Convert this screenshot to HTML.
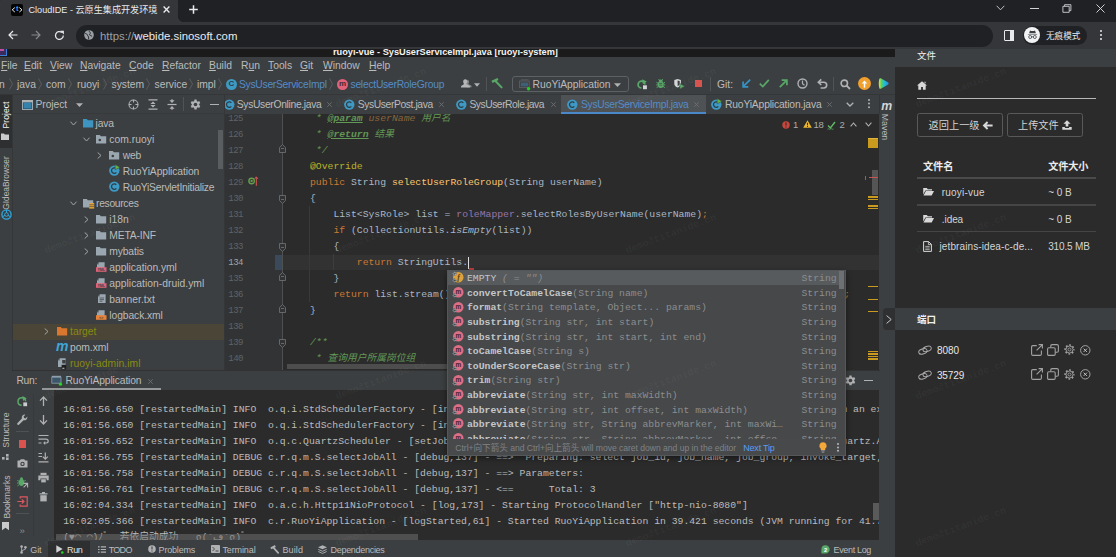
<!DOCTYPE html>
<html><head><meta charset="utf-8"><title>CloudIDE</title>
<style>
*{box-sizing:border-box;margin:0;padding:0}
html,body{width:1116px;height:557px;overflow:hidden;background:#2b2b2b}
body{position:relative;font-family:"Liberation Sans","Noto Sans CJK SC",sans-serif;font-size:12px;color:#bbbbbb}
.a{position:absolute}
.t{position:absolute;white-space:nowrap;line-height:16px;height:16px}
.mono{font-family:"Liberation Mono","Noto Sans CJK SC",monospace;font-size:10px}
.code{font-family:"Liberation Mono","Noto Sans CJK SC",monospace;font-size:9.75px;white-space:pre}
svg{position:absolute;overflow:visible}
/* chrome */
#tabstrip{left:0;top:0;width:1116px;height:22.2px;background:#202124}
#tab{left:0;top:-4px;width:177.8px;height:26.2px;background:#35363a;border-radius:6px 6px 0 0}
#toolbar{left:0;top:22.2px;width:1116px;height:26.6px;background:#35363a}
#omni{left:76px;top:25.2px;width:917px;height:21.6px;background:#202124;border-radius:11px}
/* ide */
#title{left:0;top:48.8px;width:895px;height:8.3px;background:#1b1b1b;overflow:hidden}
#menu{left:0;top:56.8px;width:895px;height:17.2px;background:#3c3f41}
#nav{left:0;top:74px;width:895px;height:20px;background:#3c3f41}
#lstrip{left:0;top:94px;width:12px;height:446px;background:#3c3f41}
#proj{left:12px;top:94px;width:212px;height:276px;background:#3c3f41;overflow:hidden}
#etabs{left:224px;top:94px;width:655.2px;height:20px;background:#3c3f41}
#rstrip{left:879.2px;top:94px;width:15.8px;height:446px;background:#3c3f41}
#gutter{left:224px;top:114px;width:59px;height:256.4px;background:#313335}
#editor{left:283px;top:114px;width:596.2px;height:256.4px;background:#2b2b2b;overflow:hidden}
#runhdr{left:12px;top:370px;width:867.2px;height:20.3px;background:#3c3f41}
#runtb{left:12px;top:390.3px;width:42px;height:149.7px;background:#3c3f41}
#console{left:54px;top:390.3px;width:825.2px;height:149.7px;background:#2b2b2b;overflow:hidden}
#status{left:0;top:540px;width:895px;height:17px;background:#3c3f41}
#rp{left:895px;top:49px;width:221px;height:508px;background:#2b2b2b}
</style></head><body>
<!-- CHROME -->
<div class="a" id="tabstrip"></div>
<div class="a" id="tab"></div>
<div class="a" style="left:177.8px;top:17.2px;width:5px;height:5px;background:radial-gradient(circle at 100% 0,rgba(53,54,58,0) 4.6px,#35363a 5.1px)"></div>
<div class="a" style="left:11px;top:4px;width:12px;height:11.5px;background:#050505;border-radius:2px"></div>
<svg style="left:11px;top:4px" width="12" height="12" viewBox="0 0 12 12"><path d="M3.8 3.6L1.2 5.8L3.8 8M8.4 3.6L11 5.8L8.4 8" stroke="#ffffff" stroke-width="0.9" fill="none"/></svg><div class="t" style="left:15.9px;top:1.4px;font-size:7.5px;color:#3d9be0;font-weight:bold">t</div>
<div class="t" style="left:28.5px;top:2.2px;font-size:9.1px;color:#e8eaed">CloudIDE - 云原生集成开发环境</div>
<svg style="left:162.6px;top:6.2px" width="7" height="7" viewBox="0 0 7 7"><path d="M0.6 0.6L6.4 6.4M6.4 0.6L0.6 6.4" stroke="#e8eaed" stroke-width="1.35" fill="none"/></svg>
<svg style="left:189px;top:5px" width="9" height="9" viewBox="0 0 9 9"><path d="M4.5 0.2V8.8M0.2 4.5H8.8" stroke="#e8eaed" stroke-width="1.5" fill="none"/></svg>
<svg style="left:996px;top:5px" width="9" height="6" viewBox="0 0 9 6"><path d="M0.7 0.8L4.5 4.8L8.3 0.8" stroke="#d0d2d5" stroke-width="0.9" fill="none"/></svg>
<div class="a" style="left:1030px;top:7.6px;width:8.5px;height:1px;background:#d0d2d5"></div>
<svg style="left:1062px;top:3.5px" width="10" height="9" viewBox="0 0 10 9"><path d="M0.9 2.3H7.2V8.3H0.9ZM2.6 2.2V0.7H8.9V6.6H7.3" stroke="#d0d2d5" stroke-width="0.9" fill="none"/></svg>
<svg style="left:1096px;top:3.8px" width="9" height="9" viewBox="0 0 9 9"><path d="M0.5 0.5L8.5 8.5M8.5 0.5L0.5 8.5" stroke="#e0e2e5" stroke-width="0.9" fill="none"/></svg>
<div class="a" id="toolbar"></div>
<div class="a" id="omni"></div>
<svg style="left:8px;top:30px" width="10" height="10" viewBox="0 0 10 10"><path d="M9.5 5H1.2M5 1L1 5L5 9" stroke="#e8eaed" stroke-width="1.2" fill="none"/></svg>
<svg style="left:31px;top:30px" width="10" height="10" viewBox="0 0 10 10"><path d="M0.5 5H8.8M5 1L9 5L5 9" stroke="#85888c" stroke-width="1.2" fill="none"/></svg>
<svg style="left:54px;top:29.5px" width="11" height="11" viewBox="0 0 11 11"><path d="M9.3 5.5A3.9 3.9 0 1 1 7.9 2.5" stroke="#e8eaed" stroke-width="1.25" fill="none"/><path d="M6.2 0.8H9.9V4.5Z" fill="#e8eaed"/></svg>
<svg style="left:83.5px;top:30px" width="10" height="10" viewBox="0 0 10 10"><circle cx="5" cy="5" r="4.8" fill="#9aa0a6"/><path d="M1.2 3.4C2.5 3.6 3.3 4.2 3.4 5.2C3.5 6 4.6 6 4.6 7V9.3M5.2 0.6C5 1.8 6.2 2 6.3 3C6.4 4 5.3 4.2 5.6 5C6 5.8 7.5 5.4 8 6.3" stroke="#202124" stroke-width="0.9" fill="none"/></svg>
<div class="t" style="left:100px;top:27.6px;font-size:11.4px;color:#e8eaed"><span style="color:#9aa0a6">https://</span>webide.sinosoft.com</div>
<div class="a" style="left:1004px;top:30px;width:10px;height:10.5px;border:1.4px solid #e8eaed;border-radius:1px"></div>
<div class="a" style="left:1009.5px;top:30px;width:4.5px;height:10.5px;background:#e8eaed"></div>
<div class="a" style="left:1023px;top:25.5px;width:64px;height:19px;background:#202124;border-radius:9.5px"></div>
<div class="a" style="left:1024px;top:27px;width:16px;height:16px;background:#f1f3f4;border-radius:8px"></div>
<svg style="left:1026.5px;top:30px" width="11" height="10" viewBox="0 0 11 10"><path d="M3 0.6L4.2 1H6.8L8 0.6L8.9 3.3H2.1ZM0.8 3.9H10.2V4.6H0.8Z" fill="#3c4043"/><circle cx="3.2" cy="7" r="1.5" fill="none" stroke="#3c4043" stroke-width="0.8"/><circle cx="7.8" cy="7" r="1.5" fill="none" stroke="#3c4043" stroke-width="0.8"/><path d="M4.7 6.8H6.3" stroke="#3c4043" stroke-width="0.7"/></svg>
<div class="t" style="left:1046px;top:28px;font-size:8.6px;color:#e8eaed">无痕模式</div>
<div class="a" style="left:1100.3px;top:30px;width:1.9px;height:1.9px;background:#e8eaed;border-radius:1px;box-shadow:0 4px 0 #e8eaed,0 8px 0 #e8eaed"></div>
<!-- IDE -->
<!-- sec_top -->
<div class="a" id="title"><div class="t" style="left:333px;top:-4.7px;font-size:9.22px;color:#f4f4f4;font-weight:bold;">ruoyi-vue - SysUserServiceImpl.java [ruoyi-system]</div><div class="a" style="left:0px;top:0.0px;width:7px;height:7px;background:#3b2a5e;border-right:1px solid #3a7fd5;border-bottom:1px solid #3a7fd5"></div><div class="a" style="left:0px;top:0.7px;width:4px;height:2px;background:#c14fa0;"></div></div><div class="a" id="menu"><div class="t" style="left:1px;top:1.0px;font-size:10.3px;"><u>F</u>ile</div><div class="t" style="left:24px;top:1.0px;font-size:10.3px;"><u>E</u>dit</div><div class="t" style="left:50px;top:1.0px;font-size:10.3px;"><u>V</u>iew</div><div class="t" style="left:80px;top:1.0px;font-size:10.3px;"><u>N</u>avigate</div><div class="t" style="left:129px;top:1.0px;font-size:10.3px;"><u>C</u>ode</div><div class="t" style="left:162px;top:1.0px;font-size:10.3px;"><u>R</u>efactor</div><div class="t" style="left:209px;top:1.0px;font-size:10.3px;"><u>B</u>uild</div><div class="t" style="left:241px;top:1.0px;font-size:10.3px;">R<u>u</u>n</div><div class="t" style="left:268px;top:1.0px;font-size:10.3px;"><u>T</u>ools</div><div class="t" style="left:300px;top:1.0px;font-size:10.3px;"><u>G</u>it</div><div class="t" style="left:323px;top:1.0px;font-size:10.3px;"><u>W</u>indow</div><div class="t" style="left:369px;top:1.0px;font-size:10.3px;"><u>H</u>elp</div></div><div class="a" id="nav"><div class="t" style="left:-1px;top:2.7px;font-size:10.3px">n</div><div class="t" style="left:17px;top:2.7px;font-size:10.3px">java</div><div class="t" style="left:46px;top:2.7px;font-size:10.3px">com</div><div class="t" style="left:77px;top:2.7px;font-size:10.3px">ruoyi</div><div class="t" style="left:111.5px;top:2.7px;font-size:10.3px">system</div><div class="t" style="left:154.5px;top:2.7px;font-size:10.3px">service</div><div class="t" style="left:197px;top:2.7px;font-size:10.3px">impl</div><svg style="left:9px;top:4px" width="4" height="12" viewBox="0 0 4 12"><path d="M0.5 0.5L3.5 6L0.5 11.5" stroke="#606366" stroke-width="0.8" fill="none"/></svg><svg style="left:37.5px;top:4px" width="4" height="12" viewBox="0 0 4 12"><path d="M0.5 0.5L3.5 6L0.5 11.5" stroke="#606366" stroke-width="0.8" fill="none"/></svg><svg style="left:68px;top:4px" width="4" height="12" viewBox="0 0 4 12"><path d="M0.5 0.5L3.5 6L0.5 11.5" stroke="#606366" stroke-width="0.8" fill="none"/></svg><svg style="left:102.5px;top:4px" width="4" height="12" viewBox="0 0 4 12"><path d="M0.5 0.5L3.5 6L0.5 11.5" stroke="#606366" stroke-width="0.8" fill="none"/></svg><svg style="left:145.5px;top:4px" width="4" height="12" viewBox="0 0 4 12"><path d="M0.5 0.5L3.5 6L0.5 11.5" stroke="#606366" stroke-width="0.8" fill="none"/></svg><svg style="left:188.5px;top:4px" width="4" height="12" viewBox="0 0 4 12"><path d="M0.5 0.5L3.5 6L0.5 11.5" stroke="#606366" stroke-width="0.8" fill="none"/></svg><svg style="left:217.5px;top:4px" width="4" height="12" viewBox="0 0 4 12"><path d="M0.5 0.5L3.5 6L0.5 11.5" stroke="#606366" stroke-width="0.8" fill="none"/></svg><svg style="left:329px;top:4px" width="4" height="12" viewBox="0 0 4 12"><path d="M0.5 0.5L3.5 6L0.5 11.5" stroke="#606366" stroke-width="0.8" fill="none"/></svg><div class="a" style="left:226px;top:5px;width:10.5px;height:10.5px;border-radius:6px;background:#3e9ac4"></div><div class="t" style="left:228.4px;top:2.2px;font-size:8px;font-weight:bold;color:#2b3e4a">C</div><div class="t" style="left:239px;top:2.7px;font-size:10.3px;letter-spacing:-0.274px;color:#548cc8">SysUserServiceImpl</div><div class="a" style="left:337px;top:5px;width:10.5px;height:10.5px;border-radius:6px;background:#e0637a"></div><div class="t" style="left:339px;top:1.6px;font-size:8px;font-weight:bold;color:#4a2a30">m</div><div class="t" style="left:350.5px;top:2.7px;font-size:10.3px;letter-spacing:-0.251px;color:#548cc8">selectUserRoleGroup</div><svg style="left:460.5px;top:5px" width="11" height="9" viewBox="0 0 11 9"><path d="M6.3 0.8C7.6 0.8 8 1.8 8 2.8C8 3.8 7.6 4.6 7.3 4.9C7.8 5.6 10.6 6 10.6 7.4V8.3H5Z" fill="#85888a"/><path d="M4.2 0.2C5.8 0.2 6.3 1.3 6.3 2.5C6.3 3.6 5.8 4.5 5.4 4.9C6 5.8 9 6.2 9 7.6V8.6H0V7.6C0 6.2 2.6 5.8 3.1 4.9C2.6 4.5 2.2 3.6 2.2 2.5C2.2 1.3 2.7 0.2 4.2 0.2Z" fill="#b4b6b8"/></svg><svg style="left:474px;top:9px" width="6" height="4" viewBox="0 0 6 4"><path d="M0 0.3H6L3 3.7Z" fill="#afb1b3"/></svg><div class="a" style="left:485.5px;top:3px;width:1px;height:14px;background:#515456"></div><svg style="left:491px;top:4px" width="12" height="11" viewBox="0 0 12 11"><path d="M1 3.9L7 1" stroke="#59a869" stroke-width="2.4" fill="none"/><path d="M4.2 2.8L10.6 9.4" stroke="#59a869" stroke-width="2" fill="none" stroke-linecap="round"/></svg><div class="a" style="left:511.5px;top:2px;width:117px;height:16px;border:1px solid #5e6163;border-radius:3px"></div><svg style="left:518.5px;top:4.5px" width="12" height="12" viewBox="0 0 12 12"><path d="M2 0.8H9.6" stroke="#5d6062" stroke-width="0.8"/><rect x="0.6" y="2" width="9.6" height="6.6" fill="#3c3f41" stroke="#5d6062" stroke-width="0.9"/><rect x="1.8" y="3.6" width="7.2" height="3.8" fill="#3d6076"/><circle cx="9.6" cy="9.8" r="1.7" fill="#1fd21f"/></svg><div class="t" style="left:532.5px;top:2.7px;font-size:10.3px">RuoYiApplication</div><svg style="left:614px;top:8.5px" width="7" height="4" viewBox="0 0 7 4"><path d="M0 0.2H7L3.5 3.9Z" fill="#afb1b3"/></svg><svg style="left:636.5px;top:5px" width="11" height="11" viewBox="0 0 11 11"><path d="M7.9 5.6A3.4 3.4 0 1 0 4.4 8.9" stroke="#59a869" stroke-width="1.7" fill="none"/><path d="M5.2 0.2L9.8 2.6L5.9 5.2Z" fill="#59a869"/><rect x="6" y="6.3" width="3.9" height="3.9" fill="#d0d2d4"/></svg><svg style="left:655.5px;top:4.8px" width="10" height="10" viewBox="0 0 10 10"><ellipse cx="4.7" cy="5.6" rx="2.9" ry="3.5" fill="#59a869"/><path d="M2.6 2.6A2.1 2.1 0 0 1 6.8 2.6Z" fill="#59a869"/><path d="M0.4 3.4L2.3 4.4M9 3.4L7.1 4.4M0.2 5.9H2M9.2 5.9H7.4M0.6 8.6L2.4 7.4M8.8 8.6L7 7.4M2.6 0.2L3.6 1.4M6.8 0.2L5.8 1.4" stroke="#59a869" stroke-width="1" fill="none"/><path d="M3.2 4.4H6.2M3.2 6.2H6.2" stroke="#3c3f41" stroke-width="0.7"/></svg><svg style="left:673.8px;top:4.8px" width="11" height="11" viewBox="0 0 11 11"><path d="M0.3 1.1L3.6 0.1L6.9 1.1V4.4C6.9 6.4 5.4 7.8 3.6 8.5C1.8 7.8 0.3 6.4 0.3 4.4Z" fill="#d4d6d8"/><path d="M3.6 1.4L5.7 2V4.4C5.7 5.6 4.8 6.6 3.6 7.2Z" fill="#3c3f41"/><path d="M5.8 4.4L10.8 7.2L5.8 10.2Z" fill="#59a869" stroke="#3c3f41" stroke-width="0.5"/></svg><div class="a" style="left:694.6px;top:6px;width:7.6px;height:7.4px;background:#d9534f"></div><div class="a" style="left:710px;top:3px;width:1px;height:14px;background:#515456"></div><div class="t" style="left:717px;top:2.7px;font-size:10.3px">Git:</div><svg style="left:741.5px;top:5px" width="9" height="9" viewBox="0 0 9 9"><path d="M8.2 0.6L1.6 7.2M1.1 2.6V7.8H6.3" stroke="#3592c4" stroke-width="1.7" fill="none"/></svg><svg style="left:759px;top:5px" width="11" height="9" viewBox="0 0 11 9"><path d="M0.8 4.6L3.8 7.6L9.8 0.9" stroke="#59a869" stroke-width="1.7" fill="none"/></svg><svg style="left:778.5px;top:5px" width="9" height="9" viewBox="0 0 9 9"><path d="M0.8 8.2L7.4 1.6M2.7 1.1H7.9V6.3" stroke="#59a869" stroke-width="1.7" fill="none"/></svg><svg style="left:797px;top:4px" width="11" height="11" viewBox="0 0 11 11"><circle cx="5.5" cy="5.5" r="4.5" stroke="#afb1b3" stroke-width="1.4" fill="none"/><path d="M5.5 2.6V5.7L7.5 7.2" stroke="#afb1b3" stroke-width="1.2" fill="none"/></svg><svg style="left:816.5px;top:4.5px" width="11" height="10" viewBox="0 0 11 10"><path d="M1.8 3.2H6.8A2.9 2.9 0 0 1 6.8 9H3.6" stroke="#afb1b3" stroke-width="1.6" fill="none"/><path d="M4.3 0.4L1.3 3.2L4.3 6" stroke="#afb1b3" stroke-width="1.6" fill="none"/></svg><div class="a" style="left:833px;top:3px;width:1px;height:14px;background:#515456"></div><svg style="left:840px;top:4.6px" width="11" height="11" viewBox="0 0 11 11"><circle cx="4.3" cy="4.3" r="3.2" stroke="#afb1b3" stroke-width="1.6" fill="none"/><path d="M6.6 6.6L10 10" stroke="#afb1b3" stroke-width="1.8"/></svg><div class="a" style="left:858.4px;top:3.3px;width:12.4px;height:12.4px;border-radius:7px;background:#f0a02e"></div><svg style="left:861.1px;top:5.6px" width="7" height="8" viewBox="0 0 7 8"><path d="M3.5 7.6V2.6" stroke="#fff" stroke-width="1.5" fill="none"/><path d="M3.5 0.4L6.3 3.6H0.7Z" fill="#fff"/></svg><svg style="left:878px;top:4.2px" width="11" height="11" viewBox="0 0 11 11"><defs><linearGradient id="gcol" x1="0" y1="0" x2="1" y2="0"><stop offset="0" stop-color="#e8e23c"/><stop offset="0.28" stop-color="#4fd06a"/><stop offset="0.55" stop-color="#22bfd0"/><stop offset="1" stop-color="#2a86e2"/></linearGradient></defs><path d="M1.3 1.1C1.5 0.2 2.4 0 3.2 0.4L9.8 4.2C10.9 4.8 10.9 6.2 9.8 6.8L3.2 10.6C2.4 11 1.5 10.8 1.3 9.9C0.6 7.2 0.6 3.8 1.3 1.1Z" fill="url(#gcol)"/></svg></div>

<!-- sec_left -->
<div class="a" id="lstrip"><div class="a" style="left:0px;top:0px;width:12px;height:54px;background:#2d2f30;"></div><div class="t" style="left:-7.54px;top:12.50px;width:27.08px;font-size:8.7px;color:#f4f4f4;transform:rotate(-90deg);transform-origin:50% 50%">Project</div><svg style="left:1.2px;top:38.5px" width="8.5" height="6.5" viewBox="0 0 8.5 6.5"><path d="M0 0.5H3L3.8 1.5H8V7H0Z" fill="#c8cacc"/></svg><div class="t" style="left:-20.85px;top:81.00px;width:53.69px;font-size:8.4px;color:#bbbbbb;transform:rotate(-90deg);transform-origin:50% 50%">GIdeaBrowser</div><svg style="left:0.5px;top:115px" width="11" height="11" viewBox="0 0 11 11"><circle cx="5.5" cy="5.5" r="4.6" stroke="#2fa8e0" stroke-width="1.3" fill="none"/><circle cx="5.5" cy="5.5" r="1.8" stroke="#2fa8e0" stroke-width="1" fill="none"/><path d="M5.5 1V3.6M1.6 7.7L4 6.4M9.4 7.7L7 6.4" stroke="#2fa8e0" stroke-width="1"/></svg><div class="t" style="left:-11.65px;top:328.30px;width:35.30px;font-size:8.7px;color:#bbbbbb;transform:rotate(-90deg);transform-origin:50% 50%">Structure</div><svg style="left:2px;top:359.5px" width="8" height="6" viewBox="0 0 8 6"><rect x="0" y="3" width="2.6" height="2.6" fill="#afb1b3"/><rect x="4" y="0" width="2.6" height="2.6" fill="#afb1b3"/><rect x="4" y="3.4" width="2.6" height="2.6" fill="#afb1b3"/></svg><div class="t" style="left:-15.51px;top:395.00px;width:43.01px;font-size:8.6px;color:#bbbbbb;transform:rotate(-90deg);transform-origin:50% 50%">Bookmarks</div><svg style="left:1.8px;top:427.7px" width="7" height="8.3" viewBox="0 0 7 8.3"><path d="M0 0H7V8.3L3.5 5.8L0 8.3Z" fill="#c8cacc"/></svg></div><div class="a" id="proj"><svg style="left:9.5px;top:6px" width="11" height="10" viewBox="0 0 11 10"><rect x="0.5" y="0.5" width="10" height="9" fill="#3583ab" stroke="#9aa7b0" stroke-width="1"/><rect x="1.4" y="2.6" width="8.2" height="6" fill="none" stroke="#2a5e7a" stroke-width="0.8"/><rect x="0" y="0" width="11" height="2.3" fill="#afb1b3"/></svg><div class="t" style="left:23.5px;top:2.6px;font-size:10.3px;color:#bbbbbb;letter-spacing:-0.08px;">Project</div><svg style="left:64px;top:9.3px" width="7" height="4" viewBox="0 0 7 4"><path d="M0 0.2H7L3.5 3.9Z" fill="#afb1b3"/></svg><svg style="left:116px;top:5px" width="11" height="11" viewBox="0 0 11 11"><circle cx="5.5" cy="5.5" r="4.5" stroke="#afb1b3" stroke-width="1.1" fill="none"/><path d="M5.5 0.8V3.6M5.5 7.4V10.2M0.8 5.5H3.6M7.4 5.5H10.2" stroke="#afb1b3" stroke-width="1.1"/></svg><svg style="left:135.5px;top:5px" width="10" height="11" viewBox="0 0 10 11"><path d="M0.5 0.8H9.5M0.5 10.2H9.5" stroke="#afb1b3" stroke-width="1.2"/><path d="M5 2.4L7.6 5H2.4ZM5 8.6L7.6 6H2.4Z" fill="#afb1b3"/></svg><svg style="left:154.5px;top:5px" width="10" height="11" viewBox="0 0 10 11"><path d="M0.5 5.5H9.5" stroke="#afb1b3" stroke-width="1.2"/><path d="M5 4L7.6 1.2H2.4ZM5 7L7.6 9.8H2.4Z" fill="#afb1b3"/><path d="M5 0V2M5 9V11" stroke="#afb1b3" stroke-width="1"/></svg><div class="a" style="left:170.8px;top:3px;width:1px;height:14px;background:#515456;"></div><svg style="left:177.8px;top:5.2px" width="11" height="11" viewBox="0 0 11 11"><path d="M4.41 0.62L6.59 0.62L6.80 2.04L7.85 2.64L9.18 2.12L10.27 4.01L9.15 4.90L9.15 6.10L10.27 6.99L9.18 8.88L7.85 8.36L6.80 8.96L6.59 10.38L4.41 10.38L4.20 8.96L3.15 8.36L1.82 8.88L0.73 6.99L1.85 6.10L1.85 4.90L0.73 4.01L1.82 2.12L3.15 2.64L4.20 2.04Z" fill="#afb1b3"/><circle cx="5.5" cy="5.5" r="1.8" fill="#3c3f41"/></svg><div class="a" style="left:198px;top:10px;width:9px;height:1.3px;background:#afb1b3;"></div><div class="a" style="left:0px;top:229.5px;width:212px;height:16px;background:#4a4536;"></div><svg style="left:57.5px;top:26.5px" width="7" height="5" viewBox="0 0 7 5"><path d="M0.5 0.7L3.5 4L6.5 0.7" stroke="#a4a6a8" stroke-width="1" fill="none"/></svg><svg style="left:71px;top:23.8px" width="11" height="10" viewBox="0 0 11 10"><path d="M0 1H3.8L4.8 2.2H10.2V9.4H0Z" fill="#3e94c0"/></svg><div class="t" style="left:83.5px;top:21.7px;font-size:10.3px;color:#bbbbbb;letter-spacing:-0.099px;">java</div><svg style="left:70.5px;top:42.5px" width="7" height="5" viewBox="0 0 7 5"><path d="M0.5 0.7L3.5 4L6.5 0.7" stroke="#a4a6a8" stroke-width="1" fill="none"/></svg><svg style="left:84px;top:39.8px" width="11" height="10" viewBox="0 0 11 10"><path d="M0 1H3.8L4.8 2.2H10.2V9.4H0Z" fill="#9aa7b0"/><circle cx="3.8" cy="6" r="1.3" fill="#3c3f41"/></svg><div class="t" style="left:97.3px;top:37.7px;font-size:10.3px;color:#bbbbbb;letter-spacing:0.039px;">com.ruoyi</div><svg style="left:85.0px;top:57.5px" width="5" height="7" viewBox="0 0 5 7"><path d="M0.7 0.5L4 3.5L0.7 6.5" stroke="#a4a6a8" stroke-width="1" fill="none"/></svg><svg style="left:97px;top:55.8px" width="11" height="10" viewBox="0 0 11 10"><path d="M0 1H3.8L4.8 2.2H10.2V9.4H0Z" fill="#9aa7b0"/><circle cx="3.8" cy="6" r="1.3" fill="#3c3f41"/></svg><div class="t" style="left:110.7px;top:53.7px;font-size:10.3px;color:#bbbbbb;letter-spacing:-0.199px;">web</div><svg style="left:97px;top:71.4px" width="11" height="11" viewBox="0 0 11 11"><circle cx="5.3" cy="5.6" r="5.2" fill="#3e9ac4"/><path d="M7.3 3.9A2.7 2.7 0 1 0 7.3 7.3" stroke="#2c3f4b" stroke-width="1.3" fill="none"/><path d="M6.2 -0.4L11 2.2L6.2 4.9Z" fill="#62b543" stroke="#3c3f41" stroke-width="0.5"/></svg><div class="t" style="left:110.7px;top:69.7px;font-size:10.3px;color:#bbbbbb;letter-spacing:-0.098px;">RuoYiApplication</div><svg style="left:97px;top:87.4px" width="11" height="11" viewBox="0 0 11 11"><circle cx="5.3" cy="5.6" r="5.2" fill="#3e9ac4"/><path d="M7.3 3.9A2.7 2.7 0 1 0 7.3 7.3" stroke="#2c3f4b" stroke-width="1.3" fill="none"/></svg><div class="t" style="left:110.7px;top:85.7px;font-size:10.3px;color:#bbbbbb;letter-spacing:-0.247px;">RuoYiServletInitialize</div><svg style="left:57.5px;top:106.5px" width="7" height="5" viewBox="0 0 7 5"><path d="M0.5 0.7L3.5 4L6.5 0.7" stroke="#a4a6a8" stroke-width="1" fill="none"/></svg><svg style="left:71px;top:103.8px" width="11" height="10" viewBox="0 0 11 10"><path d="M0 1H3.8L4.8 2.2H10.2V9.4H0Z" fill="#9aa7b0"/><rect x="6.2" y="5" width="5" height="5.6" fill="#e5a33a"/><path d="M6.2 6.8H11.2M6.2 8.6H11.2" stroke="#3c3f41" stroke-width="0.6"/></svg><div class="t" style="left:84px;top:101.7px;font-size:10.3px;color:#bbbbbb;letter-spacing:-0.303px;">resources</div><svg style="left:71.5px;top:121.5px" width="5" height="7" viewBox="0 0 5 7"><path d="M0.7 0.5L4 3.5L0.7 6.5" stroke="#a4a6a8" stroke-width="1" fill="none"/></svg><svg style="left:84px;top:119.8px" width="11" height="10" viewBox="0 0 11 10"><path d="M0 1H3.8L4.8 2.2H10.2V9.4H0Z" fill="#9aa7b0"/></svg><div class="t" style="left:97.3px;top:117.7px;font-size:10.3px;color:#bbbbbb;letter-spacing:0.006px;">i18n</div><svg style="left:71.5px;top:137.5px" width="5" height="7" viewBox="0 0 5 7"><path d="M0.7 0.5L4 3.5L0.7 6.5" stroke="#a4a6a8" stroke-width="1" fill="none"/></svg><svg style="left:84px;top:135.8px" width="11" height="10" viewBox="0 0 11 10"><path d="M0 1H3.8L4.8 2.2H10.2V9.4H0Z" fill="#9aa7b0"/></svg><div class="t" style="left:97.3px;top:133.7px;font-size:10.3px;color:#bbbbbb;letter-spacing:-0.171px;">META-INF</div><svg style="left:71.5px;top:153.5px" width="5" height="7" viewBox="0 0 5 7"><path d="M0.7 0.5L4 3.5L0.7 6.5" stroke="#a4a6a8" stroke-width="1" fill="none"/></svg><svg style="left:84px;top:151.8px" width="11" height="10" viewBox="0 0 11 10"><path d="M0 1H3.8L4.8 2.2H10.2V9.4H0Z" fill="#9aa7b0"/></svg><div class="t" style="left:97.3px;top:149.7px;font-size:10.3px;color:#bbbbbb;letter-spacing:-0.141px;">mybatis</div><svg style="left:84px;top:167.8px" width="11" height="10" viewBox="0 0 11 10"><path d="M3 0.3H8.6V9H1V2.4Z" fill="#9aa7b0"/><path d="M3 0.3V2.4H1Z" fill="#6c767d"/><rect x="0" y="5.2" width="10.5" height="4.6" fill="#e0637a"/><text x="5.2" y="9" font-size="3.6" font-weight="bold" text-anchor="middle" fill="#3c3f41" font-family="Liberation Sans, sans-serif">YML</text></svg><div class="t" style="left:97.3px;top:165.7px;font-size:10.3px;color:#bbbbbb;letter-spacing:-0.042px;">application.yml</div><svg style="left:84px;top:183.8px" width="11" height="10" viewBox="0 0 11 10"><path d="M3 0.3H8.6V9H1V2.4Z" fill="#9aa7b0"/><path d="M3 0.3V2.4H1Z" fill="#6c767d"/><rect x="0" y="5.2" width="10.5" height="4.6" fill="#e0637a"/><text x="5.2" y="9" font-size="3.6" font-weight="bold" text-anchor="middle" fill="#3c3f41" font-family="Liberation Sans, sans-serif">YML</text></svg><div class="t" style="left:97.3px;top:181.7px;font-size:10.3px;color:#bbbbbb;letter-spacing:0.026px;">application-druid.yml</div><svg style="left:85px;top:199.8px" width="11" height="10" viewBox="0 0 11 10"><path d="M3 0.3H8.6V9H1V2.4Z" fill="#9aa7b0"/><path d="M3 0.3V2.4H1Z" fill="#6c767d"/><path d="M2.6 4H7M2.6 5.6H7M2.6 7.2H5.5" stroke="#3c3f41" stroke-width="0.7"/></svg><div class="t" style="left:97.3px;top:197.7px;font-size:10.3px;color:#bbbbbb;letter-spacing:0.026px;">banner.txt</div><svg style="left:84px;top:215.8px" width="11" height="10" viewBox="0 0 11 10"><path d="M3 0.3H8.6V9H1V2.4Z" fill="#9aa7b0"/><path d="M3 0.3V2.4H1Z" fill="#6c767d"/><rect x="0" y="5.2" width="10.5" height="4.6" fill="#e8833a"/><text x="5.2" y="9" font-size="3.6" font-weight="bold" text-anchor="middle" fill="#3c3f41" font-family="Liberation Sans, sans-serif">&lt;&gt;</text></svg><div class="t" style="left:97.3px;top:213.7px;font-size:10.3px;color:#bbbbbb;letter-spacing:-0.08px;">logback.xml</div><svg style="left:32.0px;top:233.5px" width="5" height="7" viewBox="0 0 5 7"><path d="M0.7 0.5L4 3.5L0.7 6.5" stroke="#a4a6a8" stroke-width="1" fill="none"/></svg><svg style="left:44.5px;top:231.8px" width="11" height="10" viewBox="0 0 11 10"><path d="M0 1H3.8L4.8 2.2H10.2V9.4H0Z" fill="#d9772f"/></svg><div class="t" style="left:58px;top:229.7px;font-size:10.3px;color:#8a8a10;letter-spacing:0.027px;">target</div><div class="t" style="left:44px;top:244.2px;font-size:14px;color:#3ea6d8;font-weight:bold;font-style:italic;letter-spacing:-0.5px;">m</div><div class="t" style="left:58px;top:245.7px;font-size:10.3px;color:#bbbbbb;letter-spacing:-0.06px;">pom.xml</div><svg style="left:45px;top:263.5px" width="11" height="12" viewBox="0 0 11 12"><path d="M3 0.3H8.6V9H1V2.4Z" fill="#9aa7b0"/><path d="M3 0.3V2.4H1Z" fill="#6c767d"/><rect x="5.2" y="2" width="3.4" height="3.4" fill="#3c3f41"/><rect x="4.6" y="6.8" width="4.6" height="4.6" fill="#1e1e1e"/><rect x="5.4" y="9.8" width="2" height="0.8" fill="#fff"/></svg><div class="t" style="left:58px;top:261.7px;font-size:10.3px;color:#8a8a10;letter-spacing:0.045px;">ruoyi-admin.iml</div><div class="a" style="left:205.5px;top:36px;width:5px;height:39px;background:#5a5d5f;"></div></div>
<!-- sec_editor -->
<div class="a" id="etabs"><div class="a" style="left:336.5px;top:0px;width:145.5px;height:20px;background:#4e5254;"></div><div class="a" style="left:336.5px;top:17.5px;width:145.5px;height:2.5px;background:#4a88c7;"></div><svg style="left:0.3px;top:4.7px" width="11" height="11" viewBox="0 0 11 11"><circle cx="5.3" cy="5.6" r="5.2" fill="#3e9ac4"/><path d="M7.3 3.9A2.7 2.7 0 1 0 7.3 7.3" stroke="#2c3f4b" stroke-width="1.3" fill="none"/></svg><div class="t" style="left:12.8px;top:2.8px;font-size:10.3px;color:#bbbbbb;letter-spacing:-0.319px;">SysUserOnline.java</div><svg style="left:103.0px;top:8px" width="5" height="5" viewBox="0 0 5 5"><path d="M0.3 0.3L4.7 4.7M4.7 0.3L0.3 4.7" stroke="#6e7173" stroke-width="0.9" fill="none"/></svg><svg style="left:120.2px;top:4.7px" width="11" height="11" viewBox="0 0 11 11"><circle cx="5.3" cy="5.6" r="5.2" fill="#3e9ac4"/><path d="M7.3 3.9A2.7 2.7 0 1 0 7.3 7.3" stroke="#2c3f4b" stroke-width="1.3" fill="none"/></svg><div class="t" style="left:133.8px;top:2.8px;font-size:10.3px;color:#bbbbbb;letter-spacing:-0.393px;">SysUserPost.java</div><svg style="left:214.5px;top:8px" width="5" height="5" viewBox="0 0 5 5"><path d="M0.3 0.3L4.7 4.7M4.7 0.3L0.3 4.7" stroke="#6e7173" stroke-width="0.9" fill="none"/></svg><svg style="left:232px;top:4.7px" width="11" height="11" viewBox="0 0 11 11"><circle cx="5.3" cy="5.6" r="5.2" fill="#3e9ac4"/><path d="M7.3 3.9A2.7 2.7 0 1 0 7.3 7.3" stroke="#2c3f4b" stroke-width="1.3" fill="none"/></svg><div class="t" style="left:245.4px;top:2.8px;font-size:10.3px;color:#bbbbbb;letter-spacing:-0.454px;">SysUserRole.java</div><svg style="left:327.0px;top:8px" width="5" height="5" viewBox="0 0 5 5"><path d="M0.3 0.3L4.7 4.7M4.7 0.3L0.3 4.7" stroke="#6e7173" stroke-width="0.9" fill="none"/></svg><svg style="left:343px;top:4.7px" width="11" height="11" viewBox="0 0 11 11"><circle cx="5.3" cy="5.6" r="5.2" fill="#3e9ac4"/><path d="M7.3 3.9A2.7 2.7 0 1 0 7.3 7.3" stroke="#2c3f4b" stroke-width="1.3" fill="none"/></svg><div class="t" style="left:357px;top:2.8px;font-size:10.3px;color:#548cc8;letter-spacing:-0.303px;">SysUserServiceImpl.java</div><svg style="left:470.0px;top:8px" width="5" height="5" viewBox="0 0 5 5"><path d="M0.3 0.3L4.7 4.7M4.7 0.3L0.3 4.7" stroke="#6e7173" stroke-width="0.9" fill="none"/></svg><svg style="left:487px;top:4.7px" width="11" height="11" viewBox="0 0 11 11"><circle cx="5.3" cy="5.6" r="5.2" fill="#3e9ac4"/><path d="M7.3 3.9A2.7 2.7 0 1 0 7.3 7.3" stroke="#2c3f4b" stroke-width="1.3" fill="none"/><path d="M6.2 -0.4L11 2.2L6.2 4.9Z" fill="#62b543" stroke="#3c3f41" stroke-width="0.5"/></svg><div class="t" style="left:501px;top:2.8px;font-size:10.3px;color:#bbbbbb;letter-spacing:-0.158px;">RuoYiApplication.java</div><svg style="left:603.0px;top:8px" width="5" height="5" viewBox="0 0 5 5"><path d="M0.3 0.3L4.7 4.7M4.7 0.3L0.3 4.7" stroke="#6e7173" stroke-width="0.9" fill="none"/></svg><svg style="left:621.5px;top:8px" width="8" height="5" viewBox="0 0 8 5"><path d="M0.7 0.7L4 4L7.3 0.7" stroke="#afb1b3" stroke-width="1.3" fill="none"/></svg><div class="a" style="left:644.3px;top:5.3px;width:1.8px;height:1.8px;background:#afb1b3;border-radius:1px;box-shadow:0 3.6px 0 #afb1b3,0 7.2px 0 #afb1b3"></div></div><div class="a" id="rstrip"><div class="t" style="left:2.1px;top:4.4px;font-size:12.3px;color:#d4d6d8;font-weight:bold;font-style:italic;">m</div><div class="t" style="left:-7.21px;top:25.400000000000006px;width:26.41px;font-size:8.8px;color:#bbbbbb;transform:rotate(90deg);transform-origin:50% 50%">Maven</div></div><div class="a" id="gutter"><div class="a" style="left:51px;top:140.5px;width:8px;height:15.5px;background:#3a4a5a;"></div><div class="t mono" style="left:4.3px;top:-3.1px;font-size:9px;color:#606366;font-size:9px;letter-spacing:-0.55px;">125</div><div class="t mono" style="left:4.3px;top:12.9px;font-size:9px;color:#606366;font-size:9px;letter-spacing:-0.55px;">126</div><div class="t mono" style="left:4.3px;top:28.9px;font-size:9px;color:#606366;font-size:9px;letter-spacing:-0.55px;">127</div><div class="t mono" style="left:4.3px;top:44.9px;font-size:9px;color:#606366;font-size:9px;letter-spacing:-0.55px;">128</div><div class="t mono" style="left:4.3px;top:60.9px;font-size:9px;color:#606366;font-size:9px;letter-spacing:-0.55px;">129</div><div class="t mono" style="left:4.3px;top:76.9px;font-size:9px;color:#606366;font-size:9px;letter-spacing:-0.55px;">130</div><div class="t mono" style="left:4.3px;top:92.9px;font-size:9px;color:#606366;font-size:9px;letter-spacing:-0.55px;">131</div><div class="t mono" style="left:4.3px;top:108.9px;font-size:9px;color:#606366;font-size:9px;letter-spacing:-0.55px;">132</div><div class="t mono" style="left:4.3px;top:124.9px;font-size:9px;color:#606366;font-size:9px;letter-spacing:-0.55px;">133</div><div class="t mono" style="left:4.3px;top:140.9px;font-size:9px;color:#a4a3a3;font-size:9px;letter-spacing:-0.55px;">134</div><div class="t mono" style="left:4.3px;top:156.9px;font-size:9px;color:#606366;font-size:9px;letter-spacing:-0.55px;">135</div><div class="t mono" style="left:4.3px;top:172.9px;font-size:9px;color:#606366;font-size:9px;letter-spacing:-0.55px;">136</div><div class="t mono" style="left:4.3px;top:188.9px;font-size:9px;color:#606366;font-size:9px;letter-spacing:-0.55px;">137</div><div class="t mono" style="left:4.3px;top:204.9px;font-size:9px;color:#606366;font-size:9px;letter-spacing:-0.55px;">138</div><div class="t mono" style="left:4.3px;top:220.9px;font-size:9px;color:#606366;font-size:9px;letter-spacing:-0.55px;">139</div><div class="t mono" style="left:4.3px;top:236.9px;font-size:9px;color:#606366;font-size:9px;letter-spacing:-0.55px;">140</div><svg style="left:24.4px;top:62.3px" width="10" height="10" viewBox="0 0 10 10"><circle cx="3.6" cy="5" r="3.4" fill="#62a04b"/><text x="3.6" y="7" font-size="5.5" font-weight="bold" text-anchor="middle" fill="#2b2b2b" font-family="Liberation Sans, sans-serif">O</text><path d="M8.3 9.8V1.2M6.8 2.8L8.3 0.8L9.8 2.8" stroke="#e05555" stroke-width="1" fill="none"/></svg></div><div class="a" id="editor"><div class="a" style="left:0px;top:140.5px;width:597px;height:15.5px;background:#323232;"></div><div class="a" style="left:26px;top:92px;width:1px;height:96px;background:#393939;"></div><div class="a" style="left:49.5px;top:140px;width:1px;height:16px;background:#3d3d3d;"></div><div class="t code" style="left:27px;top:-3.200000000000003px"><span style="color:#629755;font-style:italic;"> * </span><span style="color:#629755;font-style:italic;font-weight:bold;text-decoration:underline;">@param</span><span style="color:#8a653b;font-style:italic;"> userName </span><span style="color:#629755;font-style:italic;">用户名</span></div><div class="t code" style="left:27px;top:12.800000000000011px"><span style="color:#629755;font-style:italic;"> * </span><span style="color:#629755;font-style:italic;font-weight:bold;text-decoration:underline;">@return</span><span style="color:#629755;font-style:italic;"> 结果</span></div><div class="t code" style="left:27px;top:28.80000000000001px"><span style="color:#629755;font-style:italic;"> */</span></div><div class="t code" style="left:27px;top:44.80000000000001px"><span style="color:#bbb529;">@Override</span></div><div class="t code" style="left:27px;top:60.80000000000001px"><span style="color:#cc7832;">public </span><span style="color:#a9b7c6;">String </span><span style="color:#ffc66d;">selectUserRoleGroup</span><span style="color:#a9b7c6;">(String userName)</span></div><div class="t code" style="left:27px;top:76.80000000000001px"><span style="color:#a9b7c6;">{</span></div><div class="t code" style="left:27px;top:92.80000000000001px"><span style="color:#a9b7c6;">    List&lt;SysRole&gt; list = </span><span style="color:#9876aa;">roleMapper</span><span style="color:#a9b7c6;">.selectRolesByUserName(userName)</span><span style="color:#cc7832;">;</span></div><div class="t code" style="left:27px;top:108.80000000000001px"><span style="color:#cc7832;">    if </span><span style="color:#a9b7c6;">(CollectionUtils.</span><span style="color:#a9b7c6;font-style:italic;">isEmpty</span><span style="color:#a9b7c6;">(list))</span></div><div class="t code" style="left:27px;top:124.80000000000001px"><span style="color:#a9b7c6;">    {</span></div><div class="t code" style="left:27px;top:140.8px"><span style="color:#cc7832;">        return </span><span style="color:#a9b7c6;">StringUtils.</span></div><div class="t code" style="left:27px;top:156.8px"><span style="color:#a9b7c6;">    }</span></div><div class="t code" style="left:27px;top:172.8px"><span style="color:#cc7832;">    return </span><span style="color:#a9b7c6;">list.stream().map(SysRole::getRoleName).collect(Collectors.joining(</span><span style="display:inline-block;width:48.5px;font-size:8.5px;color:#787878;background:#3a3a3a;border-radius:2px;text-align:center">delimiter:</span><span style="color:#6a8759;">&quot;,&quot;</span><span style="color:#a9b7c6;">))</span><span style="color:#cc7832;">;</span></div><div class="t code" style="left:27px;top:188.8px"><span style="color:#a9b7c6;">}</span></div><div class="t code" style="left:27px;top:220.8px"><span style="color:#629755;font-style:italic;">/**</span></div><div class="t code" style="left:27px;top:236.8px"><span style="color:#629755;font-style:italic;"> * 查询用户所属岗位组</span></div><div class="a" style="left:185.25px;top:142.5px;width:1.2px;height:12px;background:#e0e0e0;"></div><div class="a" style="left:185.6px;top:154px;width:5.4px;height:1.5px;background:#bc3f3c;"></div><div class="a" style="left:4.2px;top:249.5px;width:420px;height:5.9px;background:#4d4d4d;"></div><svg style="left:499px;top:6.5px" width="8" height="8" viewBox="0 0 8 8"><circle cx="4" cy="4" r="3.7" fill="#c9463d"/><path d="M4 1.6V4.6M4 5.6V6.6" stroke="#2b2b2b" stroke-width="1.1"/></svg><div class="t" style="left:510px;top:2.7px;font-size:9.5px;color:#a9acae;">1</div><svg style="left:519.5px;top:6.3px" width="9" height="8" viewBox="0 0 9 8"><path d="M4.5 0.3L8.8 7.8H0.2Z" fill="#e8b533"/><path d="M4.5 2.8V5.3M4.5 6V7" stroke="#2b2b2b" stroke-width="1"/></svg><div class="t" style="left:530.5px;top:2.7px;font-size:9.5px;color:#a9acae;letter-spacing:-0.4px;">18</div><svg style="left:544px;top:6.5px" width="9" height="9" viewBox="0 0 9 9"><path d="M1 4.5L3.4 7L8 1" stroke="#5fb865" stroke-width="1.4" fill="none"/><path d="M0.5 8.2C1.5 7 2.5 9 3.5 8C4.5 7 5.5 9 6.5 8" stroke="#5fb865" stroke-width="0.7" fill="none"/></svg><div class="t" style="left:556.5px;top:2.7px;font-size:9.5px;color:#a9acae;">2</div><svg style="left:566.5px;top:8px" width="7" height="5" viewBox="0 0 7 5"><path d="M0.6 4.3L3.5 1L6.4 4.3" stroke="#afb1b3" stroke-width="1.1" fill="none"/></svg><svg style="left:581.5px;top:8px" width="7" height="5" viewBox="0 0 7 5"><path d="M0.6 0.7L3.5 4L6.4 0.7" stroke="#afb1b3" stroke-width="1.1" fill="none"/></svg><div class="a" style="left:585px;top:23.7px;width:10.4px;height:10.8px;background:#c99a1e;"></div><div class="a" style="left:585px;top:23.7px;width:10.4px;height:1px;background:#e0b43a;"></div><div class="a" style="left:589px;top:56px;width:6px;height:25px;background:#555555;"></div><div class="a" style="left:585.5px;top:62.8px;width:9.5px;height:1px;background:#c75450;"></div><div class="a" style="left:582.2px;top:61.5px;width:1.3px;height:4px;background:#4a78a8;"></div><div class="a" style="left:585px;top:82.4px;width:10.4px;height:1.7px;background:#c99a1e;"></div><div class="a" style="left:585px;top:84.7px;width:10.4px;height:1.7px;background:#c99a1e;"></div><div class="a" style="left:585px;top:91px;width:10.4px;height:1.7px;background:#c99a1e;"></div><div class="a" style="left:585px;top:93.5px;width:10.4px;height:1.7px;background:#c99a1e;"></div><div class="a" style="left:585px;top:172.3px;width:10.4px;height:1.2px;background:#c99a1e;"></div><div class="a" style="left:585px;top:184.9px;width:10.4px;height:1.2px;background:#c99a1e;"></div><div class="a" style="left:585px;top:196.5px;width:10.4px;height:1.2px;background:#c99a1e;"></div><div class="a" style="left:585px;top:236.6px;width:10.4px;height:1.6px;background:#c99a1e;"></div><div class="a" style="left:585px;top:239.1px;width:10.4px;height:1.6px;background:#c99a1e;"></div><div class="a" style="left:585px;top:241.6px;width:10.4px;height:1.6px;background:#c99a1e;"></div><div class="a" style="left:585px;top:244.1px;width:10.4px;height:1.6px;background:#c99a1e;"></div></div><div class="a" style="left:282px;top:114px;width:1px;height:256px;background:#4e5052;"></div><div class="a" style="left:0px;top:93.6px;width:895px;height:1px;background:#343638;"></div><div class="a" style="left:878.7px;top:94px;width:1px;height:20px;background:#343638;"></div><div class="a" style="left:11.5px;top:94px;width:1px;height:446px;background:#343638;"></div><div class="a" style="left:12px;top:113.4px;width:212px;height:1px;background:#37393b;"></div><div class="a" style="left:224px;top:94px;width:1px;height:276px;background:#343638;"></div><svg style="left:279px;top:143.8px" width="7" height="9" viewBox="0 0 7 9"><path d="M0.5 8.5V3.5L3.5 0.5L6.5 3.5V8.5Z" fill="#313335" stroke="#6b6e70" stroke-width="0.9"/><path d="M2 4.5H5" stroke="#6b6e70" stroke-width="0.9"/></svg><svg style="left:279px;top:194.5px" width="7" height="9" viewBox="0 0 7 9"><path d="M0.5 0.5V5.5L3.5 8.5L6.5 5.5V0.5Z" fill="#313335" stroke="#6b6e70" stroke-width="0.9"/><path d="M2 4.5H5" stroke="#6b6e70" stroke-width="0.9"/></svg><svg style="left:279px;top:242.5px" width="7" height="9" viewBox="0 0 7 9"><path d="M0.5 0.5V5.5L3.5 8.5L6.5 5.5V0.5Z" fill="#313335" stroke="#6b6e70" stroke-width="0.9"/><path d="M2 4.5H5" stroke="#6b6e70" stroke-width="0.9"/></svg><svg style="left:279px;top:271.8px" width="7" height="9" viewBox="0 0 7 9"><path d="M0.5 8.5V3.5L3.5 0.5L6.5 3.5V8.5Z" fill="#313335" stroke="#6b6e70" stroke-width="0.9"/><path d="M2 4.5H5" stroke="#6b6e70" stroke-width="0.9"/></svg><svg style="left:279px;top:303.8px" width="7" height="9" viewBox="0 0 7 9"><path d="M0.5 8.5V3.5L3.5 0.5L6.5 3.5V8.5Z" fill="#313335" stroke="#6b6e70" stroke-width="0.9"/><path d="M2 4.5H5" stroke="#6b6e70" stroke-width="0.9"/></svg><svg style="left:279px;top:338.5px" width="7" height="9" viewBox="0 0 7 9"><path d="M0.5 0.5V5.5L3.5 8.5L6.5 5.5V0.5Z" fill="#313335" stroke="#6b6e70" stroke-width="0.9"/><path d="M2 4.5H5" stroke="#6b6e70" stroke-width="0.9"/></svg>
<!-- sec_run -->
<div class="a" id="runhdr"><div class="a" style="left:0px;top:0px;width:868px;height:0.8px;background:#323232;"></div><div class="t" style="left:4.5px;top:2.8px;font-size:10.3px;color:#bbbbbb;letter-spacing:-0.314px;">Run:</div><svg style="left:39.3px;top:5.3px" width="12" height="11" viewBox="0 0 12 11"><path d="M0.8 0.8H10V2.2H0.8Z" fill="#8fa0ac"/><rect x="0.8" y="2.2" width="9.2" height="6" fill="#3d566b" stroke="#8fa0ac" stroke-width="0.8"/><circle cx="9.5" cy="9.2" r="1.6" fill="#21d921"/></svg><div class="t" style="left:53.5px;top:2.8px;font-size:10.3px;color:#bbbbbb;letter-spacing:-0.129px;">RuoYiApplication</div><svg style="left:135.5px;top:9px" width="5" height="5" viewBox="0 0 5 5"><path d="M0.3 0.3L4.7 4.7M4.7 0.3L0.3 4.7" stroke="#6e7173" stroke-width="0.9" fill="none"/></svg><div class="a" style="left:30.2px;top:18.1px;width:119px;height:2.4px;background:#959799;"></div><svg style="left:833.2px;top:5px" width="10.4" height="10.4" viewBox="0 0 10.4 10.4"><path d="M4.41 0.62L6.59 0.62L6.80 2.04L7.85 2.64L9.18 2.12L10.27 4.01L9.15 4.90L9.15 6.10L10.27 6.99L9.18 8.88L7.85 8.36L6.80 8.96L6.59 10.38L4.41 10.38L4.20 8.96L3.15 8.36L1.82 8.88L0.73 6.99L1.85 6.10L1.85 4.90L0.73 4.01L1.82 2.12L3.15 2.64L4.20 2.04Z" fill="#afb1b3"/><circle cx="5.5" cy="5.5" r="1.8" fill="#3c3f41"/></svg><div class="a" style="left:852.4px;top:9.6px;width:9px;height:1.4px;background:#afb1b3;"></div></div><div class="a" id="runtb"><svg style="left:5.0px;top:5.7px" width="11" height="11" viewBox="0 0 11 11"><path d="M8.6 5.3A3.8 3.8 0 1 0 4.6 9.3" stroke="#59a869" stroke-width="1.5" fill="none"/><path d="M5.3 0L9.7 2.3L6.2 5Z" fill="#59a869"/><rect x="6.3" y="6.4" width="3.8" height="3.8" fill="#c9cbcd"/></svg><svg style="left:5.0px;top:23.7px" width="11" height="11" viewBox="0 0 11 11"><path d="M10.3 2.6A3 3 0 0 1 6.6 6.2L2.2 10.6A1.1 1.1 0 0 1 0.5 9L4.9 4.5A3 3 0 0 1 8.4 0.7L6.6 2.6L7.2 4L8.6 4.5Z" fill="#afb1b3"/></svg><div class="a" style="left:6.7px;top:49.9px;width:7.6px;height:7.4px;background:#d9534f;"></div><svg style="left:5.0px;top:67.7px" width="11" height="11" viewBox="0 0 11 11"><path d="M0.5 2.6H2.8L3.8 1.2H7.2L8.2 2.6H10.5V9.5H0.5Z" fill="#afb1b3"/><circle cx="5.5" cy="5.9" r="2.2" fill="#3c3f41"/><circle cx="5.5" cy="5.9" r="1.1" fill="#afb1b3"/></svg><svg style="left:5.0px;top:86.7px" width="11" height="11" viewBox="0 0 11 11"><ellipse cx="4.5" cy="5.5" rx="2.6" ry="3.4" fill="#59a869"/><circle cx="4.5" cy="1.8" r="1.5" fill="#59a869"/><path d="M0.3 3.4L2.2 4.4M8.7 3.4L6.8 4.4M0 6H2M0.5 8.8L2.3 7.6" stroke="#59a869" stroke-width="0.9" fill="none"/><path d="M6.4 6.4H10.6V10.6M10.4 6.6L6.6 10.4" stroke="#afb1b3" stroke-width="1.1" fill="none"/></svg><svg style="left:5.0px;top:105.7px" width="11" height="11" viewBox="0 0 11 11"><path d="M3.2 2.6V0.8H10.2V10.2H3.2V8.4" stroke="#db5860" stroke-width="1.2" fill="none"/><path d="M0.3 5.5H6.8M4.8 3.3L7 5.5L4.8 7.7" stroke="#db5860" stroke-width="1.2" fill="none"/></svg><div class="t" style="left:7.5px;top:133.2px;font-size:9.5px;color:#8a8d8f;">»</div><div class="a" style="left:4px;top:41.0px;width:13px;height:1px;background:#4f5254;"></div><div class="a" style="left:4px;top:122.5px;width:13px;height:1px;background:#4f5254;"></div><div class="a" style="left:21px;top:3.7px;width:1px;height:142px;background:#37393b;"></div><svg style="left:25.5px;top:5.7px" width="11" height="11" viewBox="0 0 11 11"><path d="M5.5 10V1.5M2 4.6L5.5 1L9 4.6" stroke="#afb1b3" stroke-width="1.3" fill="none"/></svg><svg style="left:25.5px;top:23.7px" width="11" height="11" viewBox="0 0 11 11"><path d="M5.5 1V9.5M2 6.4L5.5 10L9 6.4" stroke="#afb1b3" stroke-width="1.3" fill="none"/></svg><svg style="left:25.5px;top:43.7px" width="11" height="11" viewBox="0 0 11 11"><path d="M0.5 1.5H10.5M0.5 9H3.5" stroke="#afb1b3" stroke-width="1.2" fill="none"/><path d="M0.5 5.2H8.3A1.9 1.9 0 0 1 8.3 9H6" stroke="#afb1b3" stroke-width="1.2" fill="none"/><path d="M7.2 7L5.2 9L7.2 11Z" fill="#afb1b3"/></svg><svg style="left:25.5px;top:62.2px" width="11" height="11" viewBox="0 0 11 11"><path d="M0.5 1.5H4M0.5 4.5H4M0.5 9.8H10.5" stroke="#afb1b3" stroke-width="1.2" fill="none"/><path d="M7.3 0.5V7M4.8 4.6L7.3 7.2L9.8 4.6" stroke="#afb1b3" stroke-width="1.2" fill="none"/></svg><svg style="left:25.5px;top:81.7px" width="11" height="11" viewBox="0 0 11 11"><path d="M2.5 0.8H8.5V3H2.5Z" fill="#afb1b3"/><path d="M0.3 3.6H10.7V8.2H8.6V6.4H2.4V8.2H0.3Z" fill="#afb1b3"/><path d="M3.2 7.2H7.8V10.4H3.2Z" fill="#afb1b3"/></svg><svg style="left:25.5px;top:100.7px" width="11" height="11" viewBox="0 0 11 11"><path d="M1.5 2.2H9.5V3.4H1.5ZM4 1H7V2.2H4Z" fill="#afb1b3"/><path d="M2.3 4.2H8.7V10.4H2.3Z" fill="#afb1b3"/></svg></div><div class="a" id="console"><div class="t code" style="left:9.200000000000003px;top:12.00px;color:#bbbbbb">16:01:56.650 [restartedMain] INFO  o.q.i.StdSchedulerFactory - [instantiate,1374] - Quartz scheduler &#x27;RuoyiScheduler&#x27; initialized from an externally provided properties instance.</div><div class="t code" style="left:9.200000000000003px;top:28.00px;color:#bbbbbb">16:01:56.650 [restartedMain] INFO  o.q.i.StdSchedulerFactory - [instantiate,1378] - Quartz scheduler version: 2.3.2</div><div class="t code" style="left:9.200000000000003px;top:44.00px;color:#bbbbbb">16:01:56.652 [restartedMain] INFO  o.q.c.QuartzScheduler - [setJobFactory,2293] - JobFactory set to: org.springframework.scheduling.quartz.AdaptableJobFactory@4b2f9a1c</div><div class="t code" style="left:9.200000000000003px;top:60.00px;color:#bbbbbb">16:01:56.755 [restartedMain] DEBUG c.r.q.m.S.selectJobAll - [debug,137] - ==&gt;  Preparing: select job_id, job_name, job_group, invoke_target, cron_expression, misfire_policy</div><div class="t code" style="left:9.200000000000003px;top:76.00px;color:#bbbbbb">16:01:56.758 [restartedMain] DEBUG c.r.q.m.S.selectJobAll - [debug,137] - ==&gt; Parameters: </div><div class="t code" style="left:9.200000000000003px;top:92.00px;color:#bbbbbb">16:01:56.761 [restartedMain] DEBUG c.r.q.m.S.selectJobAll - [debug,137] - &lt;==      Total: 3</div><div class="t code" style="left:9.200000000000003px;top:108.00px;color:#bbbbbb">16:02:04.334 [restartedMain] INFO  o.a.c.h.Http11NioProtocol - [log,173] - Starting ProtocolHandler [&quot;http-nio-8080&quot;]</div><div class="t code" style="left:9.200000000000003px;top:124.00px;color:#bbbbbb">16:02:05.366 [restartedMain] INFO  c.r.RuoYiApplication - [logStarted,61] - Started RuoYiApplication in 39.421 seconds (JVM running for 41.723)</div><div class="t code" style="left:9.200000000000003px;top:140.00px;color:#bbbbbb">(♥◠‿◠)ﾉﾞ  若依启动成功   ლ(´ڡ`ლ)ﾞ</div><div class="a" style="left:819px;top:112.7px;width:6px;height:17px;background:#5a5a5a;"></div><div class="a" style="left:2px;top:144.2px;width:362px;height:5.5px;background:rgba(110,110,110,0.55);"></div></div><div class="a" id="status"><div class="a" style="left:48px;top:0.5px;width:42px;height:16.5px;background:#2d2f30;"></div><svg style="left:19.5px;top:4.5px" width="7" height="9" viewBox="0 0 7 9"><circle cx="1.6" cy="1.6" r="1.3" fill="#afb1b3"/><circle cx="1.6" cy="7.4" r="1.3" fill="#afb1b3"/><circle cx="5.4" cy="2.2" r="1.3" fill="#afb1b3"/><path d="M1.6 2V7M5.4 3V4.2L1.6 5.8" stroke="#afb1b3" stroke-width="0.9" fill="none"/></svg><div class="t" style="left:30.3px;top:1.6px;font-size:9px;color:#bbbbbb;letter-spacing:-0.1px;">Git</div><svg style="left:56px;top:4.8px" width="8" height="9" viewBox="0 0 8 9"><path d="M0.3 0.3L6.6 4L0.3 7.7Z" fill="#d0d2d4"/><circle cx="6.3" cy="7.5" r="1.3" fill="#21d921"/></svg><div class="t" style="left:67px;top:1.6px;font-size:9px;color:#e2e2e2;letter-spacing:-0.337px;">Run</div><svg style="left:97.5px;top:5.5px" width="8" height="7" viewBox="0 0 8 7"><path d="M0 0.8H1.6M0 3.5H1.6M0 6.2H1.6M2.8 0.8H8M2.8 3.5H8M2.8 6.2H8" stroke="#afb1b3" stroke-width="1.2"/></svg><div class="t" style="left:108.7px;top:1.6px;font-size:9px;color:#bbbbbb;letter-spacing:-0.709px;">TODO</div><svg style="left:147.5px;top:5px" width="8" height="8" viewBox="0 0 8 8"><circle cx="4" cy="4" r="3.8" fill="#afb1b3"/><path d="M4 1.6V4.6M4 5.6V6.6" stroke="#3c3f41" stroke-width="1.1"/></svg><div class="t" style="left:158.6px;top:1.6px;font-size:9px;color:#bbbbbb;letter-spacing:-0.189px;">Problems</div><svg style="left:210.5px;top:5px" width="9" height="8" viewBox="0 0 9 8"><rect x="0" y="0" width="9" height="8" rx="0.8" fill="#afb1b3"/><path d="M1.5 2L3.5 4L1.5 6M4.5 6H7.5" stroke="#3c3f41" stroke-width="0.9" fill="none"/></svg><div class="t" style="left:222.5px;top:1.6px;font-size:9px;color:#bbbbbb;letter-spacing:-0.126px;">Terminal</div><svg style="left:270px;top:4.8px" width="9" height="9" viewBox="0 0 9 9"><path d="M0.8 3.3L5.4 1" stroke="#afb1b3" stroke-width="2" fill="none"/><path d="M3.2 2.4L8.2 7.8" stroke="#afb1b3" stroke-width="1.7" fill="none" stroke-linecap="round"/></svg><div class="t" style="left:282.5px;top:1.6px;font-size:9px;color:#bbbbbb;letter-spacing:0.097px;">Build</div><svg style="left:318px;top:4.5px" width="9" height="9" viewBox="0 0 9 9"><path d="M4.5 0.3L9 2.3L4.5 4.3L0 2.3Z" fill="#afb1b3"/><path d="M0.3 4.4L4.5 6.3L8.7 4.4M0.3 6.5L4.5 8.4L8.7 6.5" stroke="#afb1b3" stroke-width="0.9" fill="none"/></svg><div class="t" style="left:330.5px;top:1.6px;font-size:9px;color:#bbbbbb;letter-spacing:-0.295px;">Dependencies</div><svg style="left:821px;top:4.5px" width="9" height="9" viewBox="0 0 9 9"><path d="M4.5 0.2A4.2 4.2 0 0 1 4.5 8.6H0.4V4.4A4.2 4.2 0 0 1 4.5 0.2Z" fill="#59a869"/><text x="4.6" y="6.6" font-size="5.8" font-weight="bold" text-anchor="middle" fill="#fff" font-family="Liberation Sans, sans-serif">2</text></svg><div class="t" style="left:833.5px;top:1.6px;font-size:9px;color:#bbbbbb;letter-spacing:-0.337px;">Event Log</div></div>
<!-- sec_right -->
<div class="a" id="rp"><div class="a" style="left:0px;top:0px;width:221px;height:17.5px;background:#3c3f41;"></div><div class="t" style="left:22px;top:-1.1px;font-size:9.5px;color:#f0f0f0;">文件</div><svg style="left:22px;top:31.5px" width="10" height="9" viewBox="0 0 10 9"><path d="M5 0.3L10 4.6H8.7V8.8H5.9V6H4.1V8.8H1.3V4.6H0Z" fill="#d8d8d8"/><path d="M7.4 0.8H8.6V2.6L7.4 1.6Z" fill="#d8d8d8"/></svg><div class="a" style="left:22px;top:48.6px;width:179px;height:1px;background:#b8b8b8;"></div><div class="a" style="left:22.4px;top:64px;width:86px;height:23.6px;border:1px solid #58595a;border-radius:2.5px;"></div><div class="a" style="left:111.5px;top:64px;width:76.2px;height:23.6px;border:1px solid #58595a;border-radius:2.5px;"></div><div class="t" style="left:33.6px;top:68.9px;font-size:10.2px;color:#d4d4d4;">返回上一级</div><svg style="left:87.6px;top:71.6px" width="10" height="9" viewBox="0 0 10 9"><path d="M9.6 4.5H2M4.6 1L1 4.5L4.6 8" stroke="#d8d8d8" stroke-width="1.9" fill="none"/></svg><div class="t" style="left:123px;top:68.9px;font-size:10.2px;color:#d4d4d4;">上传文件</div><svg style="left:166.7px;top:70.8px" width="10" height="10" viewBox="0 0 10 10"><path d="M5 0.2L8.6 3.8H6.3V6.6H3.7V3.8H1.4Z" fill="#d8d8d8"/><path d="M0.3 7H2.9V8H7.1V7H9.7V9.8H0.3Z" fill="#d8d8d8"/></svg><div class="t" style="left:27.9px;top:109.5px;font-size:10.2px;color:#ececec;font-weight:bold;">文件名</div><div class="t" style="left:153.2px;top:109.5px;font-size:10.2px;color:#ececec;font-weight:bold;letter-spacing:-0.2px;">文件大小</div><div class="a" style="left:22.4px;top:127.8px;width:178.4px;height:1.8px;background:#4a4a4a;"></div><div class="a" style="left:22.4px;top:155.3px;width:178.4px;height:1.3px;background:#454545;"></div><div class="a" style="left:22.4px;top:182px;width:178.4px;height:1.3px;background:#454545;"></div><svg style="left:27.9px;top:138.3px" width="11" height="9" viewBox="0 0 11 9"><path d="M0.2 1H3.8L4.8 2.2H9V3.4H2.4L0.2 7.6Z" fill="#d8d8d8"/><path d="M2.9 4.1H11L8.7 8.6H0.5Z" fill="#d8d8d8"/></svg><div class="t" style="left:46.8px;top:135.8px;font-size:10px;color:#d4d4d4;letter-spacing:0.208px;">ruoyi-vue</div><div class="t" style="left:153.2px;top:135.8px;font-size:10px;color:#d4d4d4;letter-spacing:-0.026px;">~ 0 B</div><svg style="left:27.9px;top:165px" width="11" height="9" viewBox="0 0 11 9"><path d="M0.2 1H3.8L4.8 2.2H9V3.4H2.4L0.2 7.6Z" fill="#d8d8d8"/><path d="M2.9 4.1H11L8.7 8.6H0.5Z" fill="#d8d8d8"/></svg><div class="t" style="left:46.8px;top:162.5px;font-size:10px;color:#d4d4d4;letter-spacing:-0.077px;">.idea</div><div class="t" style="left:153.2px;top:162.5px;font-size:10px;color:#d4d4d4;letter-spacing:-0.026px;">~ 0 B</div><svg style="left:28px;top:192px" width="9" height="11" viewBox="0 0 9 11"><path d="M0.6 0.6H5.6L8.4 3.4V10.4H0.6Z" fill="none" stroke="#d8d8d8" stroke-width="1"/><path d="M5.4 0.6V3.6H8.4" fill="none" stroke="#d8d8d8" stroke-width="0.8"/><path d="M2.3 5.4H6.7M2.3 7H6.7M2.3 8.6H6.7" stroke="#d8d8d8" stroke-width="0.7"/></svg><div class="t" style="left:44.5px;top:190.2px;font-size:10px;color:#d4d4d4;letter-spacing:0.107px;">jetbrains-idea-c-de...</div><div class="t" style="left:153.2px;top:190.2px;font-size:10px;color:#d4d4d4;letter-spacing:-0.15px;">310.5 MB</div><div class="a" style="left:0px;top:258.8px;width:221px;height:22.2px;background:#3c3f41;"></div><div class="t" style="left:21.9px;top:263px;font-size:9.5px;color:#f0f0f0;font-weight:bold;">端口</div><svg style="left:23.4px;top:295.8px" width="14" height="10" viewBox="0 0 14 10"><ellipse cx="4.9" cy="6.4" rx="4.3" ry="2.5" transform="rotate(-18 4.9 6.4)" stroke="#a8a8a8" stroke-width="0.95" fill="none"/><ellipse cx="9.1" cy="3.9" rx="4.3" ry="2.5" transform="rotate(-18 9.1 3.9)" stroke="#a8a8a8" stroke-width="0.95" fill="none"/></svg><div class="t" style="left:41.9px;top:294.1px;font-size:10px;color:#e6e6e6;letter-spacing:-0.062px;">8080</div><svg style="left:135.8px;top:294.6px" width="12" height="12" viewBox="0 0 12 12"><path d="M5.8 1.6H2Q0.6 1.6 0.6 3V10Q0.6 11.4 2 11.4H9Q10.4 11.4 10.4 10V6.4" stroke="#a2a2a2" stroke-width="1.1" fill="none"/><path d="M7.6 0.6H11.4V4.4M11.2 0.8L5.6 6.4" stroke="#a2a2a2" stroke-width="1.1" fill="none"/></svg><svg style="left:152px;top:294.6px" width="12" height="12" viewBox="0 0 12 12"><rect x="0.6" y="3.8" width="7.6" height="7.6" rx="1.2" stroke="#a2a2a2" stroke-width="1.1" fill="none"/><path d="M3.8 3.6V2Q3.8 0.6 5.2 0.6H10Q11.4 0.6 11.4 2V6.8Q11.4 8.2 10 8.2H8.4" stroke="#a2a2a2" stroke-width="1.1" fill="none"/></svg><svg style="left:168.5px;top:295.3px" width="11" height="11" viewBox="0 0 11 11"><circle cx="5.5" cy="5.5" r="4.4" stroke="#a2a2a2" stroke-width="1.5" fill="none" stroke-dasharray="1.75 1.705" stroke-dashoffset="0.87"/><circle cx="5.5" cy="5.5" r="3.5" stroke="#a2a2a2" stroke-width="0.9" fill="none"/><circle cx="5.5" cy="5.5" r="1.5" stroke="#a2a2a2" stroke-width="0.9" fill="none"/></svg><svg style="left:184.6px;top:295.5px" width="11" height="11" viewBox="0 0 11 11"><circle cx="5.3" cy="5.3" r="4.7" stroke="#a2a2a2" stroke-width="1" fill="none"/><path d="M3.7 3.7L6.9 6.9M6.9 3.7L3.7 6.9" stroke="#c0c0c0" stroke-width="1"/></svg><svg style="left:23.4px;top:320.5px" width="14" height="10" viewBox="0 0 14 10"><ellipse cx="4.9" cy="6.4" rx="4.3" ry="2.5" transform="rotate(-18 4.9 6.4)" stroke="#a8a8a8" stroke-width="0.95" fill="none"/><ellipse cx="9.1" cy="3.9" rx="4.3" ry="2.5" transform="rotate(-18 9.1 3.9)" stroke="#a8a8a8" stroke-width="0.95" fill="none"/></svg><div class="t" style="left:41.9px;top:318.8px;font-size:10px;color:#e6e6e6;letter-spacing:-0.082px;">35729</div><svg style="left:135.8px;top:319.3px" width="12" height="12" viewBox="0 0 12 12"><path d="M5.8 1.6H2Q0.6 1.6 0.6 3V10Q0.6 11.4 2 11.4H9Q10.4 11.4 10.4 10V6.4" stroke="#a2a2a2" stroke-width="1.1" fill="none"/><path d="M7.6 0.6H11.4V4.4M11.2 0.8L5.6 6.4" stroke="#a2a2a2" stroke-width="1.1" fill="none"/></svg><svg style="left:152px;top:319.3px" width="12" height="12" viewBox="0 0 12 12"><rect x="0.6" y="3.8" width="7.6" height="7.6" rx="1.2" stroke="#a2a2a2" stroke-width="1.1" fill="none"/><path d="M3.8 3.6V2Q3.8 0.6 5.2 0.6H10Q11.4 0.6 11.4 2V6.8Q11.4 8.2 10 8.2H8.4" stroke="#a2a2a2" stroke-width="1.1" fill="none"/></svg><svg style="left:168.5px;top:320.0px" width="11" height="11" viewBox="0 0 11 11"><circle cx="5.5" cy="5.5" r="4.4" stroke="#a2a2a2" stroke-width="1.5" fill="none" stroke-dasharray="1.75 1.705" stroke-dashoffset="0.87"/><circle cx="5.5" cy="5.5" r="3.5" stroke="#a2a2a2" stroke-width="0.9" fill="none"/><circle cx="5.5" cy="5.5" r="1.5" stroke="#a2a2a2" stroke-width="0.9" fill="none"/></svg><svg style="left:184.6px;top:320.2px" width="11" height="11" viewBox="0 0 11 11"><circle cx="5.3" cy="5.3" r="4.7" stroke="#a2a2a2" stroke-width="1" fill="none"/><path d="M3.7 3.7L6.9 6.9M6.9 3.7L3.7 6.9" stroke="#c0c0c0" stroke-width="1"/></svg></div><div class="a" style="left:883px;top:308px;width:12px;height:22px;background:#2e3032;border-radius:4px 0 0 4px;"></div><svg style="left:886px;top:314.5px" width="6" height="9" viewBox="0 0 6 9"><path d="M0.6 0.6L5.2 4.5L0.6 8.4" stroke="#d8d8d8" stroke-width="0.9" fill="none"/></svg>
<!-- sec_popup -->
<div class="a" id="popup" style="left:447.3px;top:269.9px;width:398.5px;height:186.6px;background:#46484a;overflow:hidden;box-shadow:0 2px 6px rgba(0,0,0,0.45)"><div class="a" style="left:0.0px;top:0.0px;width:398.5px;height:186.6px;border:1px solid #55585a;z-index:5;"></div><div class="a" style="left:0.0px;top:0.0px;width:392.5px;height:15.4px;background:#575b5e;"></div><svg style="left:5.5px;top:2.6px" width="11" height="11" viewBox="0 0 11 11"><circle cx="5.3" cy="5.3" r="5.2" fill="#dda23d"/><text x="5.5" y="8" font-size="7.5" font-style="italic" font-weight="bold" text-anchor="middle" fill="#5a3d12" font-family="Liberation Serif, serif">f</text><path d="M1.7 -0.6L4 1.7L1.7 4L-0.6 1.7Z" fill="#575b5e"/><path d="M1.7 0.1L3.3 1.7L1.7 3.3L0.1 1.7Z" fill="none" stroke="#a9bccb" stroke-width="0.8"/><path d="M1.7 6.2L4 8.5L1.7 10.8L-0.6 8.5Z" fill="#46484a"/><path d="M1.7 6.9L3.3 8.5L1.7 10.1L0.1 8.5Z" fill="none" stroke="#a9bccb" stroke-width="0.8"/></svg><div class="t code" style="left:19.70px;top:1.40px"><span style="color:#c4c6c8;">EMPTY</span><span style="color:#8b8d8f;font-style:italic;"> ( = &quot;&quot;)</span></div><div class="t code" style="left:354.20px;top:1.40px;color:#8b8d8f">String</div><svg style="left:5.5px;top:17.2px" width="11" height="11" viewBox="0 0 11 11"><circle cx="5.3" cy="5.3" r="5.2" fill="#dd6f85"/><text x="5.4" y="7.2" font-size="6.4" font-weight="bold" text-anchor="middle" fill="#4a1f2a" font-family="Liberation Sans, sans-serif">m</text><path d="M1.7 6.2L4 8.5L1.7 10.8L-0.6 8.5Z" fill="#46484a"/><path d="M1.7 6.9L3.3 8.5L1.7 10.1L0.1 8.5Z" fill="none" stroke="#a9bccb" stroke-width="0.8"/></svg><div class="t code" style="left:19.70px;top:16.00px"><span style="color:#c4c6c8;font-weight:bold;">convertToCamelCase</span><span style="color:#8b8d8f;">(String name)</span></div><div class="t code" style="left:354.20px;top:16.00px;color:#8b8d8f">String</div><svg style="left:5.5px;top:31.8px" width="11" height="11" viewBox="0 0 11 11"><circle cx="5.3" cy="5.3" r="5.2" fill="#dd6f85"/><text x="5.4" y="7.2" font-size="6.4" font-weight="bold" text-anchor="middle" fill="#4a1f2a" font-family="Liberation Sans, sans-serif">m</text><path d="M1.7 6.2L4 8.5L1.7 10.8L-0.6 8.5Z" fill="#46484a"/><path d="M1.7 6.9L3.3 8.5L1.7 10.1L0.1 8.5Z" fill="none" stroke="#a9bccb" stroke-width="0.8"/></svg><div class="t code" style="left:19.70px;top:30.60px"><span style="color:#c4c6c8;font-weight:bold;">format</span><span style="color:#8b8d8f;">(String template, Object... params)</span></div><div class="t code" style="left:354.20px;top:30.60px;color:#8b8d8f">String</div><svg style="left:5.5px;top:46.4px" width="11" height="11" viewBox="0 0 11 11"><circle cx="5.3" cy="5.3" r="5.2" fill="#dd6f85"/><text x="5.4" y="7.2" font-size="6.4" font-weight="bold" text-anchor="middle" fill="#4a1f2a" font-family="Liberation Sans, sans-serif">m</text><path d="M1.7 6.2L4 8.5L1.7 10.8L-0.6 8.5Z" fill="#46484a"/><path d="M1.7 6.9L3.3 8.5L1.7 10.1L0.1 8.5Z" fill="none" stroke="#a9bccb" stroke-width="0.8"/></svg><div class="t code" style="left:19.70px;top:45.20px"><span style="color:#c4c6c8;font-weight:bold;">substring</span><span style="color:#8b8d8f;">(String str, int start)</span></div><div class="t code" style="left:354.20px;top:45.20px;color:#8b8d8f">String</div><svg style="left:5.5px;top:61.0px" width="11" height="11" viewBox="0 0 11 11"><circle cx="5.3" cy="5.3" r="5.2" fill="#dd6f85"/><text x="5.4" y="7.2" font-size="6.4" font-weight="bold" text-anchor="middle" fill="#4a1f2a" font-family="Liberation Sans, sans-serif">m</text><path d="M1.7 6.2L4 8.5L1.7 10.8L-0.6 8.5Z" fill="#46484a"/><path d="M1.7 6.9L3.3 8.5L1.7 10.1L0.1 8.5Z" fill="none" stroke="#a9bccb" stroke-width="0.8"/></svg><div class="t code" style="left:19.70px;top:59.80px"><span style="color:#c4c6c8;font-weight:bold;">substring</span><span style="color:#8b8d8f;">(String str, int start, int end)</span></div><div class="t code" style="left:354.20px;top:59.80px;color:#8b8d8f">String</div><svg style="left:5.5px;top:75.6px" width="11" height="11" viewBox="0 0 11 11"><circle cx="5.3" cy="5.3" r="5.2" fill="#dd6f85"/><text x="5.4" y="7.2" font-size="6.4" font-weight="bold" text-anchor="middle" fill="#4a1f2a" font-family="Liberation Sans, sans-serif">m</text><path d="M1.7 6.2L4 8.5L1.7 10.8L-0.6 8.5Z" fill="#46484a"/><path d="M1.7 6.9L3.3 8.5L1.7 10.1L0.1 8.5Z" fill="none" stroke="#a9bccb" stroke-width="0.8"/></svg><div class="t code" style="left:19.70px;top:74.40px"><span style="color:#c4c6c8;font-weight:bold;">toCamelCase</span><span style="color:#8b8d8f;">(String s)</span></div><div class="t code" style="left:354.20px;top:74.40px;color:#8b8d8f">String</div><svg style="left:5.5px;top:90.2px" width="11" height="11" viewBox="0 0 11 11"><circle cx="5.3" cy="5.3" r="5.2" fill="#dd6f85"/><text x="5.4" y="7.2" font-size="6.4" font-weight="bold" text-anchor="middle" fill="#4a1f2a" font-family="Liberation Sans, sans-serif">m</text><path d="M1.7 6.2L4 8.5L1.7 10.8L-0.6 8.5Z" fill="#46484a"/><path d="M1.7 6.9L3.3 8.5L1.7 10.1L0.1 8.5Z" fill="none" stroke="#a9bccb" stroke-width="0.8"/></svg><div class="t code" style="left:19.70px;top:89.00px"><span style="color:#c4c6c8;font-weight:bold;">toUnderScoreCase</span><span style="color:#8b8d8f;">(String str)</span></div><div class="t code" style="left:354.20px;top:89.00px;color:#8b8d8f">String</div><svg style="left:5.5px;top:104.8px" width="11" height="11" viewBox="0 0 11 11"><circle cx="5.3" cy="5.3" r="5.2" fill="#dd6f85"/><text x="5.4" y="7.2" font-size="6.4" font-weight="bold" text-anchor="middle" fill="#4a1f2a" font-family="Liberation Sans, sans-serif">m</text><path d="M1.7 6.2L4 8.5L1.7 10.8L-0.6 8.5Z" fill="#46484a"/><path d="M1.7 6.9L3.3 8.5L1.7 10.1L0.1 8.5Z" fill="none" stroke="#a9bccb" stroke-width="0.8"/></svg><div class="t code" style="left:19.70px;top:103.60px"><span style="color:#c4c6c8;font-weight:bold;">trim</span><span style="color:#8b8d8f;">(String str)</span></div><div class="t code" style="left:354.20px;top:103.60px;color:#8b8d8f">String</div><svg style="left:5.5px;top:119.4px" width="11" height="11" viewBox="0 0 11 11"><circle cx="5.3" cy="5.3" r="5.2" fill="#dd6f85"/><text x="5.4" y="7.2" font-size="6.4" font-weight="bold" text-anchor="middle" fill="#4a1f2a" font-family="Liberation Sans, sans-serif">m</text><path d="M1.7 6.2L4 8.5L1.7 10.8L-0.6 8.5Z" fill="#46484a"/><path d="M1.7 6.9L3.3 8.5L1.7 10.1L0.1 8.5Z" fill="none" stroke="#a9bccb" stroke-width="0.8"/></svg><div class="t code" style="left:19.70px;top:118.20px"><span style="color:#c4c6c8;font-weight:bold;">abbreviate</span><span style="color:#8b8d8f;">(String str, int maxWidth)</span></div><div class="t code" style="left:354.20px;top:118.20px;color:#8b8d8f">String</div><svg style="left:5.5px;top:134.0px" width="11" height="11" viewBox="0 0 11 11"><circle cx="5.3" cy="5.3" r="5.2" fill="#dd6f85"/><text x="5.4" y="7.2" font-size="6.4" font-weight="bold" text-anchor="middle" fill="#4a1f2a" font-family="Liberation Sans, sans-serif">m</text><path d="M1.7 6.2L4 8.5L1.7 10.8L-0.6 8.5Z" fill="#46484a"/><path d="M1.7 6.9L3.3 8.5L1.7 10.1L0.1 8.5Z" fill="none" stroke="#a9bccb" stroke-width="0.8"/></svg><div class="t code" style="left:19.70px;top:132.80px"><span style="color:#c4c6c8;font-weight:bold;">abbreviate</span><span style="color:#8b8d8f;">(String str, int offset, int maxWidth)</span></div><div class="t code" style="left:354.20px;top:132.80px;color:#8b8d8f">String</div><svg style="left:5.5px;top:148.6px" width="11" height="11" viewBox="0 0 11 11"><circle cx="5.3" cy="5.3" r="5.2" fill="#dd6f85"/><text x="5.4" y="7.2" font-size="6.4" font-weight="bold" text-anchor="middle" fill="#4a1f2a" font-family="Liberation Sans, sans-serif">m</text><path d="M1.7 6.2L4 8.5L1.7 10.8L-0.6 8.5Z" fill="#46484a"/><path d="M1.7 6.9L3.3 8.5L1.7 10.1L0.1 8.5Z" fill="none" stroke="#a9bccb" stroke-width="0.8"/></svg><div class="t code" style="left:19.70px;top:147.40px"><span style="color:#c4c6c8;font-weight:bold;">abbreviate</span><span style="color:#8b8d8f;">(String str, String abbrevMarker, int maxWi…</span></div><div class="t code" style="left:354.20px;top:147.40px;color:#8b8d8f">String</div><svg style="left:5.5px;top:163.2px" width="11" height="11" viewBox="0 0 11 11"><circle cx="5.3" cy="5.3" r="5.2" fill="#dd6f85"/><text x="5.4" y="7.2" font-size="6.4" font-weight="bold" text-anchor="middle" fill="#4a1f2a" font-family="Liberation Sans, sans-serif">m</text><path d="M1.7 6.2L4 8.5L1.7 10.8L-0.6 8.5Z" fill="#46484a"/><path d="M1.7 6.9L3.3 8.5L1.7 10.1L0.1 8.5Z" fill="none" stroke="#a9bccb" stroke-width="0.8"/></svg><div class="t code" style="left:19.70px;top:162.00px"><span style="color:#c4c6c8;font-weight:bold;">abbreviate</span><span style="color:#8b8d8f;">(String str, String abbrevMarker, int offse…</span></div><div class="t code" style="left:354.20px;top:162.00px;color:#8b8d8f">String</div><div class="a" style="left:391.3px;top:0.4px;width:5.8px;height:19px;background:#6e7173;"></div><div class="a" style="left:0.0px;top:169.3px;width:398.5px;height:17.4px;background:#47494b;"></div><div class="t" style="left:8.0px;top:169.9px;font-size:8.6px;color:#808284;letter-spacing:-0.03px;">Ctrl+向下箭头 and Ctrl+向上箭头 will move caret down and up in the editor</div><div class="t" style="left:295.9px;top:169.9px;font-size:9px;color:#589df6;letter-spacing:-0.189px;">Next Tip</div><svg style="left:371.7px;top:172.1px" width="8" height="11" viewBox="0 0 8 11"><path d="M4 0.3A3.6 3.6 0 0 1 6.2 6.8V8H1.8V6.8A3.6 3.6 0 0 1 4 0.3Z" fill="#f2a83a"/><path d="M2.2 8.8H5.8M2.8 10.2H5.2" stroke="#9a9c9e" stroke-width="0.9"/></svg><div class="a" style="left:390.1px;top:173.4px;width:1.7px;height:1.7px;background:#b8babc;border-radius:1px;box-shadow:0 3.4px 0 #b8babc,0 6.8px 0 #b8babc"></div></div>
<!-- sec_wm -->
<div class="a" style="left:0;top:49px;width:1116px;height:508px;overflow:hidden;pointer-events:none"><div class="t mono" style="left:48.4px;top:48.0px;font-size:10px;font-weight:bold;color:rgba(255,255,255,0.045);transform:rotate(-20.6deg);transform-origin:0 100%">demo@titanide.cn</div><div class="t mono" style="left:48.4px;top:194.2px;font-size:10px;font-weight:bold;color:rgba(255,255,255,0.045);transform:rotate(-20.6deg);transform-origin:0 100%">demo@titanide.cn</div><div class="t mono" style="left:48.4px;top:340.4px;font-size:10px;font-weight:bold;color:rgba(255,255,255,0.045);transform:rotate(-20.6deg);transform-origin:0 100%">demo@titanide.cn</div><div class="t mono" style="left:48.4px;top:486.6px;font-size:10px;font-weight:bold;color:rgba(255,255,255,0.045);transform:rotate(-20.6deg);transform-origin:0 100%">demo@titanide.cn</div><div class="t mono" style="left:338.6px;top:48.0px;font-size:10px;font-weight:bold;color:rgba(255,255,255,0.045);transform:rotate(-20.6deg);transform-origin:0 100%">demo@titanide.cn</div><div class="t mono" style="left:338.6px;top:194.2px;font-size:10px;font-weight:bold;color:rgba(255,255,255,0.045);transform:rotate(-20.6deg);transform-origin:0 100%">demo@titanide.cn</div><div class="t mono" style="left:338.6px;top:340.4px;font-size:10px;font-weight:bold;color:rgba(255,255,255,0.045);transform:rotate(-20.6deg);transform-origin:0 100%">demo@titanide.cn</div><div class="t mono" style="left:338.6px;top:486.6px;font-size:10px;font-weight:bold;color:rgba(255,255,255,0.045);transform:rotate(-20.6deg);transform-origin:0 100%">demo@titanide.cn</div><div class="t mono" style="left:628.8px;top:48.0px;font-size:10px;font-weight:bold;color:rgba(255,255,255,0.045);transform:rotate(-20.6deg);transform-origin:0 100%">demo@titanide.cn</div><div class="t mono" style="left:628.8px;top:194.2px;font-size:10px;font-weight:bold;color:rgba(255,255,255,0.045);transform:rotate(-20.6deg);transform-origin:0 100%">demo@titanide.cn</div><div class="t mono" style="left:628.8px;top:340.4px;font-size:10px;font-weight:bold;color:rgba(255,255,255,0.045);transform:rotate(-20.6deg);transform-origin:0 100%">demo@titanide.cn</div><div class="t mono" style="left:628.8px;top:486.6px;font-size:10px;font-weight:bold;color:rgba(255,255,255,0.045);transform:rotate(-20.6deg);transform-origin:0 100%">demo@titanide.cn</div><div class="t mono" style="left:919.0px;top:48.0px;font-size:10px;font-weight:bold;color:rgba(255,255,255,0.045);transform:rotate(-20.6deg);transform-origin:0 100%">demo@titanide.cn</div><div class="t mono" style="left:919.0px;top:194.2px;font-size:10px;font-weight:bold;color:rgba(255,255,255,0.045);transform:rotate(-20.6deg);transform-origin:0 100%">demo@titanide.cn</div><div class="t mono" style="left:919.0px;top:340.4px;font-size:10px;font-weight:bold;color:rgba(255,255,255,0.045);transform:rotate(-20.6deg);transform-origin:0 100%">demo@titanide.cn</div><div class="t mono" style="left:919.0px;top:486.6px;font-size:10px;font-weight:bold;color:rgba(255,255,255,0.045);transform:rotate(-20.6deg);transform-origin:0 100%">demo@titanide.cn</div></div>
</body></html>
